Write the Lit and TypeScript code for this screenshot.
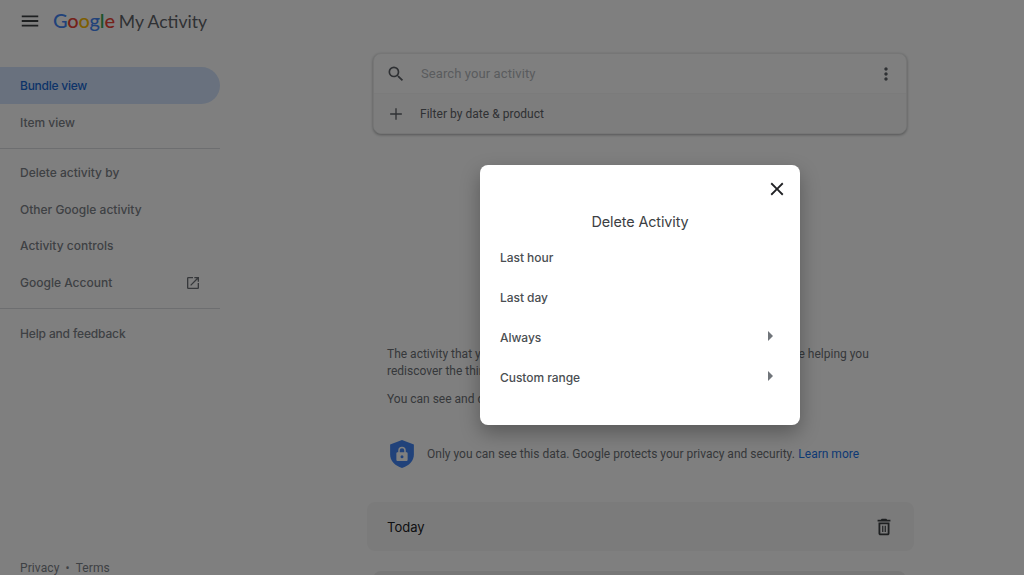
import { LitElement, html, css, svg } from "lit";
import { customElement } from "lit/decorators.js";

const icon = (d: unknown, cls: string) =>
  html`<svg class=${cls} viewBox="0 0 24 24" aria-hidden="true">${d}</svg>`;
const P = {
  menu: svg`<path d="M3 18h18v-2H3v2zm0-5h18v-2H3v2zm0-7v2h18V6H3z"/>`,
  search: svg`<path d="M15.5 14h-.79l-.28-.27A6.471 6.471 0 0 0 16 9.5 6.5 6.5 0 1 0 9.5 16c1.61 0 3.09-.59 4.23-1.57l.27.28v.79l5 4.99L20.49 19l-4.99-5zm-6 0C7.01 14 5 11.99 5 9.5S7.01 5 9.5 5 14 7.01 14 9.5 11.99 14 9.5 14z"/>`,
  more: svg`<path d="M12 8c1.1 0 2-.9 2-2s-.9-2-2-2-2 .9-2 2 .9 2 2 2zm0 2c-1.1 0-2 .9-2 2s.9 2 2 2 2-.9 2-2-.9-2-2-2zm0 6c-1.1 0-2 .9-2 2s.9 2 2 2 2-.9 2-2-.9-2-2-2z"/>`,
  add: svg`<path d="M19 12.800h-6.200V19h-1.600v-6.200H5v-1.600h6.200V5h1.600v6.200H19v1.600z"/>`,
  close: svg`<path d="M19 6.410L17.590 5 12 10.590 6.410 5 5 6.410 10.590 12 5 17.590 6.410 19 12 13.410 17.590 19 19 17.590 13.410 12z"/>`,
  arrow: svg`<path d="M10 17l5-5-5-5v10z"/>`,
  trash: svg`<path d="M6 19c0 1.100.9 2 2 2h8c1.100 0 2-.9 2-2V7H6v12zM8 9h8v10H8V9zm7.500-5l-1-1h-5l-1 1H5v2h14V4h-3.500z"/><path d="M10 10.500h1.300v7H10zM12.700 10.500H14v7h-1.300z"/>`,
  open: svg`<path d="M19 19H5V5h7V3H5a2 2 0 0 0-2 2v14a2 2 0 0 0 2 2h14c1.100 0 2-.9 2-2v-7h-2v7zM14 3v2h3.590l-9.830 9.830 1.410 1.410L19 6.410V10h2V3h-7z"/>`,
  shield: svg`<path fill="#4285f4" d="M12 .8 2.500 4.300v8c0 5 3.800 9 9.500 10.900 5.700-1.900 9.500-5.900 9.500-10.900v-8z"/><path fill="#fff" d="M15.500 10.500H15V9.200a3 3 0 0 0-6 0v1.300h-.5c-.6 0-1 .4-1 1v5c0 .6.400 1 1 1h7c.6 0 1-.4 1-1v-5c0-.6-.4-1-1-1zM12 15.300a1.200 1.200 0 1 1 0-2.400 1.200 1.200 0 0 1 0 2.400zm1.800-4.800h-3.600V9.200a1.800 1.800 0 0 1 3.600 0z"/>`,
};

@customElement("app-root")
export class AppRoot extends LitElement {
  static styles = css`
    :host {
      display: block;
      position: relative;
      width: 1024px;
      height: 575px;
      overflow: hidden;
      background: #fff;
      font-family: Roboto, "Liberation Sans", sans-serif;
      color: #3c4043;
    }
    svg { display: block; fill: #5f6368; flex: none; }
    .page { display: flex; flex-direction: column; height: 575px; }
    .header { display: flex; align-items: center; height: 42px; flex: none; }
    .menu { width: 22px; height: 22px; margin-left: 19px; fill: #3c4043; }
    .logo { display: flex; align-items: baseline; margin: -2px 0 0 12px; }
    .logo .g { font-size: 20px; font-family: Lato, sans-serif; letter-spacing: -0.200px; font-weight: 500; }
    .logo .t { margin-left: 4px; color: #5f6368; font-family: Lato, sans-serif; font-size: 17.600px; }
    .b { color: #4285f4; } .r { color: #ea4335; } .y { color: #fbbc05; } .gr { color: #34a853; }
    .body { display: flex; flex: 1; min-height: 0; }
    .side { width: 220px; flex: none; display: flex; flex-direction: column; padding-top: 25px; font-size: 12px; font-weight: 500; font-family: Inter, Roboto, sans-serif; color: #7d8288; }
    .item { display: flex; align-items: center; justify-content: space-between; height: 36.700px; flex: none; padding: 0 20px; }
    .item svg { width: 16px; height: 16px; margin-right: -.5px; fill: #6d7176; }
    .active { background: #d2e3fc; color: #1967d2; border-radius: 0 19px 19px 0; height: 37px; letter-spacing: -.25px; }
    .help { letter-spacing: -.15px; }
    .rule { height: 1px; flex: none; background: #dadce0; margin: 7.500px 0 5px; }
    .rule.low { margin-bottom: 6px; }
    .foot { margin-top: auto; margin-bottom: -1px; padding: 0 20px; height: 15px; display: flex; gap: 6px; font-weight: 400; font-family: Roboto, sans-serif; font-size: 12px; letter-spacing: .1px; line-height: 15px; }
    .main { flex: 1; display: flex; flex-direction: column; padding: 11px 110px 0 153px; min-width: 0; }
    .search { width: 534px; height: 81px; flex: none; box-sizing: border-box; border-radius: 8px; background: #fff; box-shadow: 0 1px 3px rgba(60,64,67,.45); border: 1px solid #eceded; display: flex; flex-direction: column; }
    .row { display: flex; align-items: center; flex: 1; padding: 0 10px 0 12px; font-size: 12px; }
    .row svg { width: 20px; height: 20px; }
    .row.one { border-bottom: 1px solid #f6f6f6; }
    .ph { flex: 1; margin-left: 15px; font-size: 13px; color: #b4b8bc; letter-spacing: .1px; }
    .row.two { background: #fafafa; border-radius: 0 0 8px 8px; }
    .row.two span { margin-left: 14px; color: #5f6368; font-weight: 400; letter-spacing: .03px; }
    .copy { margin: 212px 0 0 14px; width: 500px; font-size: 12px; line-height: 17px; color: #6d7176; flex: none; }
    .copy p { margin: 0 0 11px; }
    .privacy { display: flex; align-items: center; flex: none; margin: 19.500px 0 0 13.500px; font-size: 12px; color: #6d7176; white-space: nowrap; }
    .privacy svg { width: 30px; height: 30px; margin-right: 10.500px; }
    .privacy a { color: #1a73e8; margin-left: 3.500px; }
    .day { display: flex; align-items: center; justify-content: space-between; width: 547px; height: 49px; flex: none; margin: 33.500px 0 0 -6px; padding: 0 19px 0 20px; box-sizing: border-box; background: #f7f7f7; border-radius: 8px; font-size: 13px; font-weight: 400; font-family: Inter, Roboto, sans-serif; color: #202124; }
    .day svg { width: 22px; height: 22px; fill: #3c4043; }
    .next { width: 533px; height: 12px; flex: none; margin: 20px 0 0 0; border-radius: 8px 8px 0 0; background: #eeeeee; }
    .scrim { position: absolute; inset: 0; background: rgba(0,0,0,.5); display: flex; justify-content: center; padding: 165px 0 0 256px; box-sizing: border-box; }
    .dialog { width: 320px; height: 260px; box-sizing: border-box; border-radius: 8px; background: #fff; box-shadow: 0 8px 20px rgba(0,0,0,.3); display: flex; flex-direction: column; padding: 12.500px 0 0; font-family: Inter, Roboto, sans-serif; }
    .x { width: 22px; height: 22px; fill: #202124; align-self: flex-end; margin-right: 12.500px; }
    h2 { margin: 12.500px 0 0; height: 20px; line-height: 20px; text-align: center; font-size: 14.400px; font-weight: 400; color: #3c4043; letter-spacing: -.1px; }
    .opts { margin-top: 5px; display: flex; flex-direction: column; }
    .opt { height: 40px; padding: 0 20px; display: flex; align-items: center; justify-content: space-between; font-size: 12px; font-weight: 500; color: #4a4e52; letter-spacing: -.05px; }
    .opt svg { width: 24px; height: 24px; margin: -3px -2px 0 0; fill: #70757a; }
  `;

  render() {
    return html`
      <div class="page">
        <header class="header">
          ${icon(P.menu, "menu")}
          <div class="logo">
            <span class="g"><span class="b">G</span><span class="r">o</span><span class="y">o</span><span class="b">g</span><span class="gr">l</span><span class="r">e</span></span>
            <span class="t">My Activity</span>
          </div>
        </header>
        <div class="body">
          <nav class="side">
            <div class="item active">Bundle view</div>
            <div class="item">Item view</div>
            <div class="rule"></div>
            <div class="item">Delete activity by</div>
            <div class="item">Other Google activity</div>
            <div class="item">Activity controls</div>
            <div class="item">Google Account ${icon(P.open, "")}</div>
            <div class="rule low"></div>
            <div class="item help">Help and feedback</div>
            <div class="foot"><span>Privacy</span><span>•</span><span>Terms</span></div>
          </nav>
          <main class="main">
            <div class="search">
              <div class="row one">${icon(P.search, "")}<div class="ph">Search your activity</div>${icon(P.more, "")}</div>
              <div class="row two">${icon(P.add, "")}<span>Filter by date &amp; product</span></div>
            </div>
            <div class="copy">
              <p>The activity that you keep helps Google make services more useful for you, like helping you rediscover the things you’ve searched for, read, and watched.</p>
              <p>You can see and delete your activity using the controls on this page.</p>
            </div>
            <div class="privacy">${icon(P.shield, "")}Only you can see this data. Google protects your privacy and security. <a>Learn more</a></div>
            <div class="day"><span>Today</span>${icon(P.trash, "")}</div>
            <div class="next"></div>
          </main>
        </div>
      </div>
      <div class="scrim">
        <div class="dialog" role="dialog">
          ${icon(P.close, "x")}
          <h2>Delete Activity</h2>
          <div class="opts">
            <div class="opt">Last hour</div>
            <div class="opt">Last day</div>
            <div class="opt">Always ${icon(P.arrow, "")}</div>
            <div class="opt">Custom range ${icon(P.arrow, "")}</div>
          </div>
        </div>
      </div>
    `;
  }
}
